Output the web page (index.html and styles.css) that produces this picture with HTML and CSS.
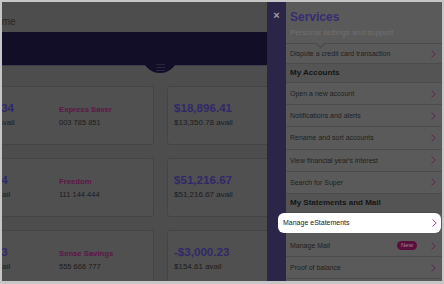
FILE: index.html
```html
<!DOCTYPE html>
<html lang="en">
<head>
  <meta charset="UTF-8">
  <meta name="viewport" content="width=device-width, initial-scale=1.0">
  <title>Services</title>
  <link rel="stylesheet" href="styles.css">
</head>
<body>
  <div class="screen">
    <!-- Accounts page (dimmed) -->
    <div class="page">
      <div class="page-top">
        <span class="page-title">Home</span>
      </div>
      <div class="hero">
        <div class="hero-tab">
          <svg width="9" height="7" viewBox="0 0 9 7">
            <path d="M0 0.5h9M0 3.5h9M0 6.5h9" stroke="#29253f" stroke-width="1"/>
          </svg>
        </div>
      </div>
      <div class="accounts">
        <div class="card">
          <div class="balance">
            <div class="amount">$24,381.34</div>
            <div class="avail">$12,005.00 avail</div>
          </div>
          <div class="account">
            <div class="account-name">Express Saver</div>
            <div class="account-number">003 785 851</div>
          </div>
        </div>
        <div class="card">
          <div class="balance">
            <div class="amount">$18,896.41</div>
            <div class="avail">$13,350.78 avail</div>
          </div>
        </div>
        <div class="card">
          <div class="balance">
            <div class="amount">$9,870.14</div>
            <div class="avail">$9,870.14 avail</div>
          </div>
          <div class="account">
            <div class="account-name">Freedom</div>
            <div class="account-number">111 144 444</div>
          </div>
        </div>
        <div class="card">
          <div class="balance">
            <div class="amount">$51,216.67</div>
            <div class="avail">$51,216.67 avail</div>
          </div>
        </div>
        <div class="card">
          <div class="balance">
            <div class="amount">$4,512.73</div>
            <div class="avail">$4,512.73 avail</div>
          </div>
          <div class="account">
            <div class="account-name">Sense Savings</div>
            <div class="account-number">555 666 777</div>
          </div>
        </div>
        <div class="card">
          <div class="balance">
            <div class="amount">-$3,000.23</div>
            <div class="avail">$154.61 avail</div>
          </div>
        </div>
      </div>
    </div>

    <!-- Services panel -->
    <div class="panel">
      <div class="panel-strip">
        <span class="close">&times;</span>
      </div>
      <div class="panel-body">
        <div class="panel-head">
          <h2>Services</h2>
          <p>Personal settings and support</p>
        </div>
        <div class="menu">
          <div class="menu-row first">
            <span>Dispute a credit card transaction</span>
            <svg class="chevron" width="5" height="8" viewBox="0 0 5 8"><path d="M0.6 0.6L4.2 4L0.6 7.4"/></svg>
          </div>
          <div class="menu-group">My Accounts</div>
          <div class="menu-row">
            <span>Open a new account</span>
            <svg class="chevron" width="5" height="8" viewBox="0 0 5 8"><path d="M0.6 0.6L4.2 4L0.6 7.4"/></svg>
          </div>
          <div class="menu-row">
            <span>Notifications and alerts</span>
            <svg class="chevron" width="5" height="8" viewBox="0 0 5 8"><path d="M0.6 0.6L4.2 4L0.6 7.4"/></svg>
          </div>
          <div class="menu-row">
            <span>Rename and sort accounts</span>
            <svg class="chevron" width="5" height="8" viewBox="0 0 5 8"><path d="M0.6 0.6L4.2 4L0.6 7.4"/></svg>
          </div>
          <div class="menu-row">
            <span>View financial year's interest</span>
            <svg class="chevron" width="5" height="8" viewBox="0 0 5 8"><path d="M0.6 0.6L4.2 4L0.6 7.4"/></svg>
          </div>
          <div class="menu-row">
            <span>Search for Super</span>
            <svg class="chevron" width="5" height="8" viewBox="0 0 5 8"><path d="M0.6 0.6L4.2 4L0.6 7.4"/></svg>
          </div>
          <div class="menu-group">My Statements and Mail</div>
          <div class="menu-row highlight">
            <span>Manage eStatements</span>
            <svg class="chevron" width="5" height="8" viewBox="0 0 5 8"><path d="M0.6 0.6L4.2 4L0.6 7.4"/></svg>
          </div>
          <div class="menu-row">
            <span>Manage Mail</span>
            <span class="row-end">
              <span class="badge">New</span>
              <svg class="chevron" width="5" height="8" viewBox="0 0 5 8"><path d="M0.6 0.6L4.2 4L0.6 7.4"/></svg>
            </span>
          </div>
          <div class="menu-row">
            <span>Proof of balance</span>
            <svg class="chevron" width="5" height="8" viewBox="0 0 5 8"><path d="M0.6 0.6L4.2 4L0.6 7.4"/></svg>
          </div>
        </div>
      </div>
    </div>
  </div>
</body>
</html>
```

FILE: styles.css
```css
/* General */
body {
  margin: 0;
  padding: 2px 2px 3px 2px;
  background-color: #c6c6c6;
  font-family: "Liberation Sans", Arial, sans-serif;
}

.screen {
  display: flex;
  width: 440px;
  height: 279px;
  overflow: hidden;
}

/* Accounts page */
.page {
  width: 265px;
  flex: none;
  background-color: #4d4d4d;
  overflow: hidden;
}

.page-top {
  height: 30px;
  padding-top: 15px;
  box-sizing: border-box;
}

.page-title {
  display: block;
  margin-left: -13px;
  font-size: 10px;
  line-height: 10px;
  color: #262626;
}

.hero {
  position: relative;
  height: 33px;
  background-color: #120e28;
  border-bottom: 1px solid #403d4a;
}

.hero-tab {
  position: absolute;
  left: 140px;
  top: 5px;
  width: 36px;
  height: 36px;
  border-radius: 50%;
  background-color: #120e28;
  display: flex;
  justify-content: center;
  align-items: flex-end;
  padding-bottom: 2px;
  box-sizing: border-box;
}

.accounts {
  display: grid;
  grid-template-columns: 205px 205px;
  gap: 13px;
  margin-left: -53px;
  width: 423px;
  padding-top: 20px;
}

.card {
  display: flex;
  height: 59px;
  box-sizing: border-box;
  padding: 14px 6px 0;
  border: 1px solid #444444;
  border-radius: 3px;
  background-color: #505050;
}

.balance {
  width: 103px;
  flex: none;
}

.amount {
  font-size: 11.6px;
  line-height: 14px;
  font-weight: bold;
  color: #30286a;
  white-space: nowrap;
}

.avail {
  margin-top: 3px;
  font-size: 8px;
  line-height: 10px;
  color: #1c1c1c;
  white-space: nowrap;
}

.account {
  padding-top: 4px;
}

.account-name {
  font-size: 7.7px;
  line-height: 10px;
  font-weight: bold;
  color: #5e1647;
  white-space: nowrap;
}

.account-number {
  margin-top: 3px;
  font-size: 7.5px;
  line-height: 10px;
  color: #1c1c1c;
  white-space: nowrap;
}

/* Services panel */
.panel {
  display: flex;
  width: 175px;
  flex: none;
}

.panel-strip {
  width: 19px;
  flex: none;
  background-color: #2b2548;
  text-align: center;
}

.close {
  display: block;
  margin-top: 7px;
  font-size: 11px;
  line-height: 12px;
  font-weight: bold;
  color: #a0a0a0;
}

.panel-body {
  position: relative;
  width: 156px;
  flex: none;
  background-color: #5a5a5a;
}

.panel-head {
  position: relative;
  height: 42px;
  padding: 7px 0 0 4px;
  box-sizing: border-box;
  border-bottom: 1px solid #4a4a4a;
}

.panel-head::after {
  content: "";
  position: absolute;
  left: 31px;
  bottom: -4px;
  width: 6px;
  height: 6px;
  background-color: #5a5a5a;
  border-right: 1px solid #4a4a4a;
  border-bottom: 1px solid #4a4a4a;
  transform: rotate(45deg);
}

.panel-head h2 {
  margin: 0;
  font-size: 12px;
  line-height: 16px;
  color: #362b72;
}

.panel-head p {
  margin: 3px 0 0;
  font-size: 7.8px;
  line-height: 10px;
  color: #707070;
}

.menu-row {
  display: flex;
  justify-content: space-between;
  align-items: center;
  height: 21.2px;
  padding: 0 6px 0 4px;
  border-bottom: 1px solid #4b4b4b;
  font-size: 7px;
  color: #1f1f1f;
}

.menu-row.first {
  height: 19px;
}

.menu-group {
  height: 18px;
  line-height: 18px;
  padding-left: 4px;
  background-color: #545454;
  border-bottom: 1px solid #4b4b4b;
  font-size: 8px;
  font-weight: bold;
  color: #151515;
}

.chevron {
  flex: none;
  fill: none;
  stroke: #5f2553;
  stroke-width: 1;
}

.menu-row.highlight {
  position: relative;
  z-index: 1;
  height: 20px;
  margin: 0 1px 2px -8px;
  padding: 0 4px 0 5px;
  border-bottom: none;
  border-radius: 6px;
  background-color: #ffffff;
  color: #222222;
}

.menu-row.highlight .chevron {
  stroke: #c0368f;
}

.row-end {
  display: flex;
  align-items: center;
  gap: 14px;
}

.badge {
  padding: 0 4px;
  height: 9px;
  line-height: 9px;
  border-radius: 5px;
  background-color: #5a0e3c;
  color: #a08394;
  font-size: 6px;
}
```
